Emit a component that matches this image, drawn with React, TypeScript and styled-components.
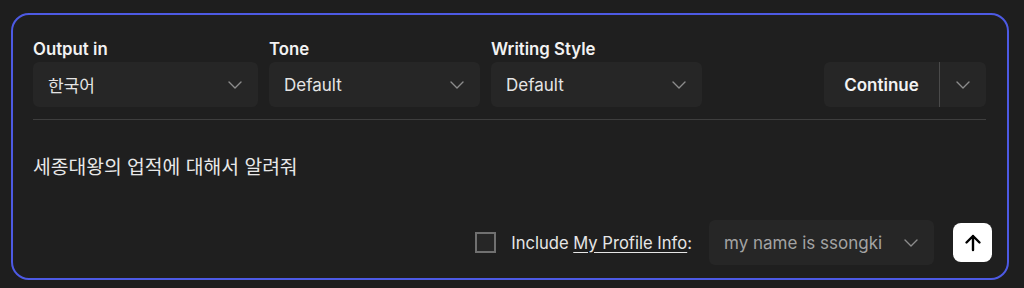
import React from 'react';
import styled, { createGlobalStyle } from 'styled-components';

const GlobalStyle = createGlobalStyle`
  body {
    margin: 0;
    background: #1e1e1e;
    font-family: Inter, "Noto Sans CJK KR", "Noto Sans", sans-serif;
    color: #ececec;
  }
`;

const Card = styled.div`
  box-sizing: border-box;
  margin: 13px 15px 0 11px;
  height: 267px;
  border: 2px solid #4d5ae4;
  border-radius: 18px;
  background: #1f1f1f;
  padding: 24px 21px 13px 20px;
  display: flex;
  flex-direction: column;
`;

const Toolbar = styled.div`
  display: flex;
  align-items: flex-end;
  gap: 11px;
`;

const Field = styled.div<{ $width: number }>`
  display: flex;
  flex-direction: column;
  gap: 3px;
  width: ${p => p.$width}px;
`;

const Label = styled.div`
  font-size: 16.8px;
  line-height: 20px;
  font-weight: 600;
  color: #f2f2f2;
  white-space: nowrap;
`;

const Select = styled.div<{ $muted?: boolean; $width?: number }>`
  box-sizing: border-box;
  height: 45px;
  ${p => (p.$width ? `width: ${p.$width}px;` : '')}
  border-radius: 6px;
  background: #262626;
  display: flex;
  align-items: center;
  justify-content: space-between;
  padding: 0 16px 0 15px;
  font-size: 17px;
  color: ${p => (p.$muted ? '#a3a3a3' : '#e4e4e4')};
  white-space: nowrap;
`;

const Spacer = styled.div`
  flex: 1;
`;

const SplitButton = styled.div`
  display: flex;
  height: 45px;
  width: 162px;
  border-radius: 6px;
  background: #262626;
  overflow: hidden;
`;

const ButtonMain = styled.div`
  width: 115px;
  display: flex;
  align-items: center;
  justify-content: center;
  font-size: 17px;
  font-weight: 600;
  color: #f2f2f2;
  border-right: 1px solid #4a4a4a;
`;

const ButtonSide = styled.div`
  flex: 1;
  display: flex;
  align-items: center;
  justify-content: center;
`;

const Rule = styled.div`
  height: 1px;
  background: #3e3e3e;
  margin-top: 12px;
`;

const Prompt = styled.div`
  margin-top: 34px;
  font-size: 19.3px;
  line-height: 26px;
  color: #e8e8e8;
  flex: 1;
`;

const Footer = styled.div`
  display: flex;
  align-items: center;
  justify-content: flex-end;
  margin-right: -6px;
`;

const Check = styled.div`
  box-sizing: border-box;
  width: 21px;
  height: 21px;
  border: 2px solid #707070;
  background: #262626;
  margin-right: 15px;
`;

const IncludeText = styled.span`
  font-size: 16.6px;
  color: #e6e6e6;
  margin-right: 17px;
  white-space: nowrap;
  u {
    text-underline-offset: 3px;
  }
`;

const SendButton = styled.div`
  width: 39px;
  height: 39px;
  border-radius: 8px;
  background: #ffffff;
  margin-left: 19px;
  display: flex;
  align-items: center;
  justify-content: center;
`;

const Chevron = () => (
  <svg width="14" height="8" viewBox="0 0 14 8" fill="none">
    <path d="M1 1l6 6 6-6" stroke="#8c8c8c" strokeWidth="1.4" strokeLinecap="round" strokeLinejoin="round" />
  </svg>
);

const ArrowUp = () => (
  <svg width="20" height="20" viewBox="0 0 20 20" fill="none">
    <path d="M10 17V3M3.5 9.5L10 3l6.5 6.5" stroke="#000" strokeWidth="2.4" strokeLinecap="round" strokeLinejoin="round" />
  </svg>
);

const App: React.FC = () => (
  <React.Fragment>
    <GlobalStyle />
    <Card>
      <Toolbar>
        <Field $width={225}>
          <Label>Output in</Label>
          <Select>한국어<Chevron /></Select>
        </Field>
        <Field $width={211}>
          <Label>Tone</Label>
          <Select>Default<Chevron /></Select>
        </Field>
        <Field $width={211}>
          <Label>Writing Style</Label>
          <Select>Default<Chevron /></Select>
        </Field>
        <Spacer />
        <SplitButton>
          <ButtonMain>Continue</ButtonMain>
          <ButtonSide><Chevron /></ButtonSide>
        </SplitButton>
      </Toolbar>
      <Rule />
      <Prompt>세종대왕의 업적에 대해서 알려줘</Prompt>
      <Footer>
        <Check />
        <IncludeText>Include <u>My Profile Info</u>:</IncludeText>
        <Select $muted $width={225}>my name is ssongki<Chevron /></Select>
        <SendButton><ArrowUp /></SendButton>
      </Footer>
    </Card>
  </React.Fragment>
);

export default App;
